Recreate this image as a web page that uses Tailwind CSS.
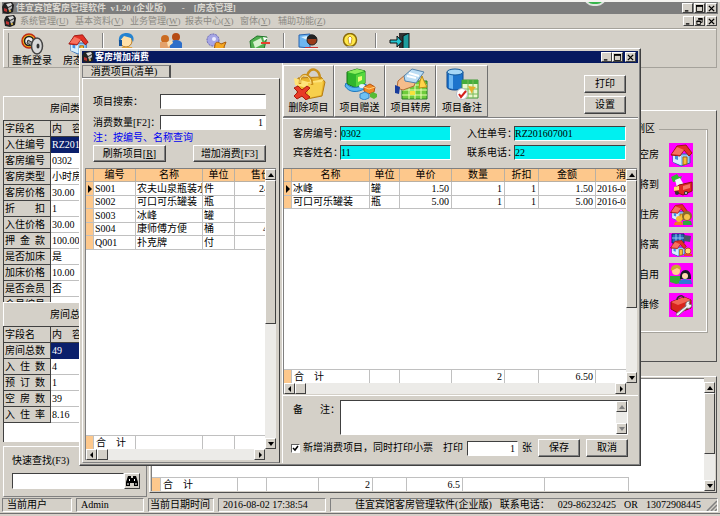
<!DOCTYPE html>
<html lang="zh-CN">
<head>
    <meta charset="UTF-8">
    <meta name="viewport" content="width=device-width, initial-scale=1.0">
    <title>佳宜宾馆客房管理软件</title>
    <script src="https://cdn.jsdelivr.net/npm/@tailwindcss/browser@4"></script>
</head>
<body class="relative flex flex-col h-screen overflow-hidden bg-[#d4d0c8] border-t-2 border-[#f4f3f0] text-black text-[10px] leading-3 font-['Liberation_Serif','Noto_Sans_CJK_SC',serif]">

    <!-- Shared glyphs -->
    <svg class="hidden">
        <symbol id="up" viewBox="0 0 8 8"><path d="M4 2 7 6H1z"/></symbol>
        <symbol id="down" viewBox="0 0 8 8"><path d="M1 2h6L4 6z"/></symbol>
        <symbol id="left" viewBox="0 0 8 8"><path d="M2 4 5 1v6z"/></symbol>
        <symbol id="right" viewBox="0 0 8 8"><path d="M6 4 3 1v6z"/></symbol>
        <symbol id="min" viewBox="0 0 8 8"><path d="M1 6h4v1.500H1z"/></symbol>
        <symbol id="max" viewBox="0 0 8 8"><path d="M.5 1h7v6.500h-7z" fill="none" stroke="#000"/><path d="M0 0h8v2H0z"/></symbol>
        <symbol id="restore" viewBox="0 0 8 8"><path d="M3 1h4v4H5M1 3.500h4v4H1z" fill="none" stroke="#000"/><path d="M2.500 0h5v2h-5zM.5 3h5v1.500h-5z"/></symbol>
        <symbol id="close" viewBox="0 0 8 8"><path d="m1 1 6 6M7 1 1 7" stroke="#000" stroke-width="1.600"/></symbol>
        <symbol id="app" viewBox="0 0 12 12"><path d="M2 1l8-1 2 3-1 7-5 2-5-1-1-6z" fill="#222"/><path d="M4 2l5-1 1 2-4 2z" fill="#ddd"/><path d="M2 6l3 1v3L2 9z" fill="#b33"/><path d="M6 6l4-2v2L7 9z" fill="#bbb"/><circle cx="8" cy="9" r="1" fill="#e8c34a"/></symbol>
        <symbol id="house" viewBox="0 0 24 24"><path d="M4 11v8l8 4 9-3v-9z" fill="#8fc8f4" stroke="#2b65b0"/><path d="M4 11l4-5 4 7v9l-8-3z" fill="#d8effc"/><path d="M8 3l9-1 6 8-3 3-5-6-4 6-9-1z" fill="#e33125" stroke="#9c1712"/><path d="M8 4l7 3-4 5-8-1z" fill="#f7725f"/><path d="M14 14h4v7l-4 1z" fill="#f6bd35" stroke="#a46711"/><path d="M6 13h3v4l-3-1z" fill="#438de0"/></symbol>
    </svg>

    <!-- Main window title -->
    <header class="flex items-center h-3 mx-0.5 shrink-0 bg-[#7d7d7d] text-[#dcd9d2] text-[9px] font-bold">
        <svg class="size-3 mr-0.5"><use href="#app"/></svg>
        <h1 class="flex-1 whitespace-pre">佳宜宾馆客房管理软件  v1.20 (企业版)       -    [房态管理]</h1>
        <div class="flex gap-px pr-px">
            <button aria-label="最小化" class="grid place-items-center w-[11px] h-[10px] border border-t-white border-l-white border-r-[#404040] border-b-[#404040] bg-[#d4d0c8]"><svg class="size-[7px]"><use href="#min"/></svg></button>
            <button aria-label="最大化" class="grid place-items-center w-[11px] h-[10px] border border-t-white border-l-white border-r-[#404040] border-b-[#404040] bg-[#d4d0c8]"><svg class="size-[7px]"><use href="#max"/></svg></button>
            <button aria-label="关闭" class="grid place-items-center w-[11px] h-[10px] border border-t-white border-l-white border-r-[#404040] border-b-[#404040] bg-[#d4d0c8]"><svg class="size-[7px]"><use href="#close"/></svg></button>
        </div>
    </header>
    <div class="absolute -top-[2px] right-[58px] w-[78px] h-[2px] bg-[#b9b9b7]"></div>
    <div class="absolute -top-[14px] right-[114px] w-[22px] h-[18px] rounded-full bg-[#35b44a] border-2 border-[#dfe3df]"></div>

    <!-- Menu -->
    <nav class="flex items-center h-[14px] mx-0.5 shrink-0 text-[9px] text-[#8b8983]">
        <svg class="size-3 ml-0.5 mr-1"><use href="#app"/></svg>
        <a href="#" class="w-[55px]">系统管理(<u>U</u>)</a>
        <a href="#" class="w-[55px]">基本资料(<u>V</u>)</a>
        <a href="#" class="w-[55px]">业务管理(<u>W</u>)</a>
        <a href="#" class="w-[55px]">报表中心(<u>X</u>)</a>
        <a href="#" class="w-[38px]">窗体(<u>Y</u>)</a>
        <a href="#" class="flex-1">辅助功能(<u>Z</u>)</a>
        <button aria-label="最小化" class="grid place-items-center w-[11px] h-[10px] border border-t-white border-l-white border-r-[#404040] border-b-[#404040]"><svg class="size-[7px]"><use href="#min"/></svg></button>
        <button aria-label="还原" class="grid place-items-center w-[11px] h-[10px] mr-px border border-t-white border-l-white border-r-[#404040] border-b-[#404040]"><svg class="size-[7px]"><use href="#restore"/></svg></button>
        <button aria-label="关闭" class="grid place-items-center w-[11px] h-[10px] mr-px border border-t-white border-l-white border-r-[#404040] border-b-[#404040]"><svg class="size-[7px]"><use href="#close"/></svg></button>
    </nav>

    <!-- Toolbar -->
    <div class="flex h-10 mx-[3px] pt-1 pl-1 shrink-0 border border-t-[#a5a29b] border-l-white border-r-[#a5a29b] border-b-[#a5a29b] shadow-[inset_0_1px_#fff]">
        <button class="flex flex-col items-center w-[47px] border-l border-[#8b8983]">
            <svg class="w-6 h-[22px] shrink-0" viewBox="0 0 24 22"><circle cx="9" cy="8" r="7" fill="#f3b21c" stroke="#c02a12" stroke-width="1.500"/><circle cx="9" cy="8" r="4.500" fill="#eee" stroke="#222" stroke-width="1.500"/><path d="m8 7 9 5-2 3-8-5z" fill="#999" stroke="#333"/><ellipse cx="17" cy="13" rx="5.500" ry="8" fill="#d8d8d8" stroke="#444" stroke-width="1.500"/><ellipse cx="18" cy="13" rx="1.500" ry="2.500" fill="#333"/></svg>
            重新登录
        </button>
        <button class="flex flex-col items-center w-[46px]">
            <svg class="size-[22px] shrink-0"><use href="#house"/></svg>
            房态表
        </button>
        <div class="w-px h-8 mx-px bg-[#808080] shadow-[1px_0_#fff]"></div>
        <button aria-label="预订" class="flex justify-center w-[44px]">
            <svg class="size-5" viewBox="0 0 20 20"><circle cx="10" cy="8" r="6" fill="#ffe0a8" stroke="#b97b20"/><path d="M3 9C2 2 6 0 11 0s8 4 6 9l-2-4-7-2z" fill="#2583d1"/><path d="M3 7h3v6H3z" fill="#14539a"/><path d="M6 14h10l2 6H4z" fill="#e0a33e"/></svg>
        </button>
        <button aria-label="入住" class="flex justify-center w-[46px]">
            <svg class="w-[22px] h-5" viewBox="0 0 22 20"><circle cx="16" cy="4" r="4" fill="#b64b13"/><path d="M10 10c2-4 10-4 12 0v9H10z" fill="#2e6fc9"/><circle cx="5" cy="6" r="4" fill="#cb6b20"/><path d="M0 9h10v8H0z" fill="#e3a16b"/><path d="m7 9 5-2 1 3-5 4z" fill="#fde1b3"/></svg>
        </button>
        <button aria-label="换房" class="flex justify-center w-[43px]">
            <svg class="w-[22px] h-5" viewBox="0 0 22 20"><circle cx="8" cy="7" r="6" fill="#a6a6e5" stroke="#6462b6" stroke-dasharray="2 1"/><circle cx="9" cy="6" r="2" fill="#eef"/><path d="M10 12c0-4 4-3 6-1l5-2-2 5 1 4H9z" fill="#f5a821" stroke="#a85a0a"/></svg>
        </button>
        <button aria-label="结账" class="flex justify-center w-[45px]">
            <svg class="w-[22px] h-5" viewBox="0 0 22 20"><path d="m1 8 7-5 10 1-3 12H2z" fill="#4fae4e" stroke="#21742a"/><path d="m4 9 8-4 2 6-8 4z" fill="#d5f0cd"/><path d="m14 4 5 1-4 3z" fill="#fff"/><path d="M12 9h9v2h-9z" fill="#e5412d"/></svg>
        </button>
        <div class="w-px h-8 mx-px bg-[#808080] shadow-[1px_0_#fff]"></div>
        <button aria-label="会员" class="flex justify-center w-[46px]">
            <svg class="w-5 h-5" viewBox="0 0 20 20"><path d="m1 2 11-1v14L1 14z" fill="#6eb6f0" stroke="#2b65b0"/><path d="m3 4 6-1v4z" fill="#d7effc"/><circle cx="14" cy="7" r="5" fill="#9b3c1a" stroke="#222"/><path d="M9 6c0-6 9-6 10 0z" fill="#222"/><path d="M7 14h13v6H7z" fill="#c33"/></svg>
        </button>
        <button aria-label="提示" class="flex justify-center w-[38px]">
            <svg class="w-5 h-5" viewBox="0 0 20 20"><circle cx="10" cy="7" r="6.500" fill="#ffe94a" stroke="#8a6a0a" stroke-width="1.500"/><path d="m8 5 2-2 2 2-1 6H9z" fill="#fff" stroke="#c08a10" stroke-width=".8"/><path d="M7 13h6v5H7z" fill="#aaa"/></svg>
        </button>
        <div class="w-px h-8 ml-1.5 bg-[#808080] shadow-[1px_0_#fff]"></div>
        <button aria-label="退出" class="flex justify-center w-[48px]">
            <svg class="w-[22px] h-5" viewBox="0 0 22 20"><path d="M10 0h10v17H10z" fill="#333"/><path d="m14 3 6-3v17l-6 3z" fill="#1f9d9d" stroke="#111"/><path d="M1 7h7V3l5 5.500-5 5.500v-4H1z" fill="#27c6d2" stroke="#111"/></svg>
        </button>
    </div>

    <main class="flex flex-1 min-h-0 mx-[3px] gap-0.5">
        <!-- Room info column -->
        <section class="flex flex-col w-36 shrink-0 pt-7">
            <h2 class="h-6 shrink-0 pl-[46px] pt-1.5 border-t border-l border-white">房间类型信息</h2>
            <div class="h-[182px] shrink-0 overflow-hidden bg-white border-t border-l border-[#404040]">
                <table class="w-full table-fixed border-separate border-spacing-0 text-left whitespace-pre">
                    <colgroup><col class="w-[47px]"><col></colgroup>
                    <tr class="h-4 bg-[#d4d0c8]"><th class="font-normal pl-px border-r border-b border-[#404040]">字段名</th><th class="font-normal pl-px border-b border-[#404040]">内    容</th></tr>
                    <tr class="h-4"><th class="font-normal px-px bg-[#d4d0c8] border-r border-b border-[#404040]">入住编号</th><td class="pl-px bg-[#0a1f6b] text-white">RZ201607001</td></tr>
                    <tr class="h-4"><th class="font-normal px-px bg-[#d4d0c8] border-r border-b border-[#404040]">客房编号</th><td class="pl-px border-b border-[#c0c0c0]">0302</td></tr>
                    <tr class="h-4"><th class="font-normal px-px bg-[#d4d0c8] border-r border-b border-[#404040]">客房类型</th><td class="pl-px border-b border-[#c0c0c0]">小时房</td></tr>
                    <tr class="h-4"><th class="font-normal px-px bg-[#d4d0c8] border-r border-b border-[#404040]">客房价格</th><td class="pl-px border-b border-[#c0c0c0]">30.00</td></tr>
                    <tr class="h-4"><th class="font-normal px-px bg-[#d4d0c8] border-r border-b border-[#404040]"><span class="flex justify-between w-10"><i class="not-italic">折</i><i class="not-italic">扣</i></span></th><td class="pl-px border-b border-[#c0c0c0]">1</td></tr>
                    <tr class="h-4"><th class="font-normal px-px bg-[#d4d0c8] border-r border-b border-[#404040]">入住价格</th><td class="pl-px border-b border-[#c0c0c0]">30.00</td></tr>
                    <tr class="h-4"><th class="font-normal px-px bg-[#d4d0c8] border-r border-b border-[#404040]"><span class="flex justify-between w-10"><i class="not-italic">押</i><i class="not-italic">金</i><i class="not-italic">款</i></span></th><td class="pl-px border-b border-[#c0c0c0]">100.00</td></tr>
                    <tr class="h-4"><th class="font-normal px-px bg-[#d4d0c8] border-r border-b border-[#404040]">是否加床</th><td class="pl-px border-b border-[#c0c0c0]">是</td></tr>
                    <tr class="h-4"><th class="font-normal px-px bg-[#d4d0c8] border-r border-b border-[#404040]">加床价格</th><td class="pl-px border-b border-[#c0c0c0]">10.00</td></tr>
                    <tr class="h-4"><th class="font-normal px-px bg-[#d4d0c8] border-r border-b border-[#404040]">是否会员</th><td class="pl-px border-b border-[#c0c0c0]">否</td></tr>
                    <tr class="h-4"><th class="font-normal px-px bg-[#d4d0c8] border-r border-b border-[#404040]">会员编号</th><td class="pl-px border-b border-[#c0c0c0]"></td></tr>
                </table>
            </div>
            <h2 class="h-6 shrink-0 pl-[46px] pt-1.5 border-t border-l border-white">房间总数信息</h2>
            <div class="flex-1 min-h-0 overflow-hidden bg-white border-t border-l border-[#404040]">
                <table class="w-full table-fixed border-separate border-spacing-0 text-left whitespace-pre">
                    <colgroup><col class="w-[47px]"><col></colgroup>
                    <tr class="h-4 bg-[#d4d0c8]"><th class="font-normal pl-px border-r border-b border-[#404040]">字段名</th><th class="font-normal pl-px border-b border-[#404040]">内    容</th></tr>
                    <tr class="h-4"><th class="font-normal px-px bg-[#d4d0c8] border-r border-b border-[#404040]">房间总数</th><td class="pl-px bg-[#0a1f6b] text-white">49</td></tr>
                    <tr class="h-4"><th class="font-normal px-px bg-[#d4d0c8] border-r border-b border-[#404040]"><span class="flex justify-between w-10"><i class="not-italic">入</i><i class="not-italic">住</i><i class="not-italic">数</i></span></th><td class="pl-px border-b border-[#c0c0c0]">4</td></tr>
                    <tr class="h-4"><th class="font-normal px-px bg-[#d4d0c8] border-r border-b border-[#404040]"><span class="flex justify-between w-10"><i class="not-italic">预</i><i class="not-italic">订</i><i class="not-italic">数</i></span></th><td class="pl-px border-b border-[#c0c0c0]">1</td></tr>
                    <tr class="h-4"><th class="font-normal px-px bg-[#d4d0c8] border-r border-b border-[#404040]"><span class="flex justify-between w-10"><i class="not-italic">空</i><i class="not-italic">房</i><i class="not-italic">数</i></span></th><td class="pl-px border-b border-[#c0c0c0]">39</td></tr>
                    <tr class="h-4"><th class="font-normal px-px bg-[#d4d0c8] border-r border-b border-[#404040]"><span class="flex justify-between w-10"><i class="not-italic">入</i><i class="not-italic">住</i><i class="not-italic">率</i></span></th><td class="pl-px border-b border-[#c0c0c0]">8.16</td></tr>
                </table>
            </div>
            <div class="h-[51px] mt-1 pt-2 pl-2 pr-1.5 shrink-0 border border-t-white border-l-white border-r-[#808080] border-b-[#808080]">
                <label for="quickFind" class="block">快速查找(F3)</label>
                <div class="flex mt-1.5">
                    <input id="quickFind" type="text" class="w-28 h-4 bg-white border border-t-[#404040] border-l-[#404040] border-r-white border-b-white">
                    <button aria-label="查找" class="grid place-items-center w-4 h-4 border border-t-white border-l-white border-r-[#404040] border-b-[#404040]"><svg class="size-3" viewBox="0 0 12 12"><path d="M2 1h3v2h2V1h3l2 6v4H8V8H4v3H0V7z"/><path d="M1.500 8h1v2h-1zM9.500 8h1v2h-1zM3 4h1v2H3zM8 4h1v2H8z" fill="#fff"/></svg></button>
                </div>
            </div>
        </section>

        <!-- Room state area -->
        <section class="flex flex-col flex-1 min-w-0 pt-[42px]">
            <div class="flex justify-end h-[252px] shrink-0 pt-3 pr-2 border border-t-white border-l-white border-r-[#505050] border-b-[#505050]">
                <fieldset class="w-24 h-[210px] pr-3.5 border border-[#a5a29b] shadow-[inset_-1px_-1px_#fff]">
                    <legend class="ml-3 pr-1">图例区</legend>
                    <ul class="flex flex-col gap-1.5 pt-2">
                        <li class="flex items-center justify-end gap-2.5 h-6">空房
                            <svg class="size-6 bg-[#f0f]"><use href="#house"/></svg></li>
                        <li class="flex items-center justify-end gap-2.5 h-6">将到
                            <svg class="size-6 bg-[#f0f]" viewBox="0 0 24 24"><path d="m2 4 6-3 2 3 3-1-2 5-7 1z" fill="#32b933"/><path d="m6 7 5-2 4 7-7 2z" fill="#f4f5ff"/><path d="m10 12 13-3v9l-9 4-8-3v-4z" fill="#dd2922" stroke="#8b1110"/><path d="m5 14 5-1v4l-5 1z" fill="#ffdc70"/><path d="m14 13 7-2v4l-7 2z" fill="#f67666"/><circle cx="8" cy="20" r="2" fill="#333"/><circle cx="17" cy="20" r="2" fill="#333"/><circle cx="17" cy="20" r="1" fill="#ddd"/></svg></li>
                        <li class="flex items-center justify-end gap-2.5 h-6">住房
                            <svg class="size-6 bg-[#f0f]" viewBox="0 0 24 24"><use href="#house" width="19" height="19"/><circle cx="18" cy="13" r="5" fill="#8b6a2a"/><circle cx="18" cy="14" r="3" fill="#f5c34a"/><circle cx="10" cy="16" r="3" fill="#f8bd35"/><path d="M6 19h7l1 3H5z" fill="#f37a20"/><path d="M14 18h8l1 4h-9z" fill="#31a841"/></svg></li>
                        <li class="flex items-center justify-end gap-2.5 h-6">将离
                            <svg class="size-6 bg-[#f0f]" viewBox="0 0 24 24"><path d="M3 1h12v9H3z" fill="#2467b9" stroke="#112f68"/><path d="M7 1v9M11 1v9M3 5h12" stroke="#91c7ef"/><path d="m15 2 7 1-1 6-6-1z" fill="#456"/><use href="#house" y="6" width="18" height="18"/><circle cx="19" cy="18" r="3" fill="#ffd678" stroke="#b35c19"/><path d="M15 21h8v2h-8z" fill="#e4423a"/></svg></li>
                        <li class="flex items-center justify-end gap-2.5 h-6">自用
                            <svg class="size-6 bg-[#f0f]" viewBox="0 0 24 24"><circle cx="7" cy="8" r="4" fill="#ffd28d"/><path d="M2 8c-1-8 11-8 10-1L8 5z" fill="#c9a732"/><path d="M1 13h11v7l-5 1-6-2z" fill="#34ad35"/><path d="M11 16c-1-12 12-12 11 0z" fill="#171925"/><circle cx="16" cy="13" r="3" fill="#ffd9ae"/><path d="m10 18 5-2 7 1 1 4H10z" fill="#2f78d6"/></svg></li>
                        <li class="flex items-center justify-end gap-2.5 h-6">维修
                            <svg class="size-6 bg-[#f0f]" viewBox="0 0 24 24"><path d="m2 9 13-5 7 3v8L9 20l-7-4z" fill="#d8241d" stroke="#85100d"/><path d="m2 9 13-5 7 3-13 5z" fill="#f26554"/><path d="M8 7c0-4 6-6 7-2" fill="none" stroke="#333" stroke-width="1.500"/><path d="m8 20 9-7c-1-4 2-5 4-5l-1 3 3 1c-1 3-3 4-5 3l-8 7c-2 2-4 0-2-2z" fill="#eef0f5" stroke="#777"/></svg></li>
                    </ul>
                </fieldset>
            </div>
            <div class="flex flex-1 min-h-0 mt-3.5 mb-1 p-px border border-t-white border-l-white border-r-[#505050] border-b-[#505050]">
                <div class="flex flex-col justify-end flex-1 bg-white border-t border-l border-[#808080]">
                    <table class="w-[477px] h-[14px] table-fixed border-separate border-spacing-0 text-right whitespace-pre">
                        <colgroup><col class="w-[9px]"><col class="w-[77px]"><col class="w-[29px]"><col class="w-[52px]"><col class="w-[54px]"><col class="w-[34px]"><col class="w-14"><col class="w-[82px]"><col></colgroup>
                        <tr>
                            <td class="bg-[#fdc88c] border-t border-r border-[#c0c0c0]"></td>
                            <td class="text-left pl-0.5 border-t border-r border-[#c0c0c0]">合    计</td>
                            <td class="border-t border-r border-[#c0c0c0]"></td>
                            <td class="border-t border-r border-[#c0c0c0]"></td>
                            <td class="pr-0.5 border-t border-r border-[#c0c0c0]">2</td>
                            <td class="border-t border-r border-[#c0c0c0]"></td>
                            <td class="pr-0.5 border-t border-r border-[#c0c0c0]">6.5</td>
                            <td class="border-t border-r border-[#c0c0c0]"></td>
                            <td class="border-t border-r border-[#c0c0c0]"></td>
                        </tr>
                    </table>
                </div>
                <div class="flex flex-col w-[11px] mt-1 bg-[#ecebe8]">
                    <button aria-label="向上" class="grid place-items-center h-[11px] border border-t-white border-l-white border-r-[#404040] border-b-[#404040] bg-[#d4d0c8]"><svg class="size-2"><use href="#up"/></svg></button>
                    <div class="h-[61px] border border-t-white border-l-white border-r-[#404040] border-b-[#404040] bg-[#d4d0c8]"></div>
                    <button aria-label="向下" class="grid place-items-center h-[11px] mt-auto border border-t-white border-l-white border-r-[#404040] border-b-[#404040] bg-[#d4d0c8]"><svg class="size-2"><use href="#down"/></svg></button>
                </div>
            </div>
        </section>
    </main>

    <!-- Status bar -->
    <footer class="flex items-center gap-1 h-[17px] shrink-0 px-0.5 whitespace-pre border-b border-[#707070]">
        <div class="w-[70px] h-[14px] pl-1 border border-t-[#808080] border-l-[#808080] border-r-white border-b-white">当前用户</div>
        <div class="w-[68px] h-[14px] pl-1 border border-t-[#808080] border-l-[#808080] border-r-white border-b-white">Admin</div>
        <div class="w-[66px] h-[14px] pl-px border border-t-[#808080] border-l-[#808080] border-r-white border-b-white">当前日期时间</div>
        <div class="w-[108px] h-[14px] pl-1 border border-t-[#808080] border-l-[#808080] border-r-white border-b-white">2016-08-02 17:38:54</div>
        <div class="flex flex-1 items-center justify-end gap-2 h-[14px] border border-t-[#808080] border-l-[#808080] border-r-white border-b-white">
            <span>佳宜宾馆客房管理软件(企业版)</span>
            <span>联系电话：</span>
            <span>029-86232425</span>
            <span>OR</span>
            <span>13072908445</span>
            <svg class="size-3 -ml-1" viewBox="0 0 12 12"><path d="M2 12 12 2M6 12l6-6M10 12l2-2" stroke="#808080" stroke-width="1.500"/></svg>
        </div>
    </footer>
    <div class="h-0.5 shrink-0 bg-[#d8cfc9]"></div>

    <!-- Dialog: add consumption -->
    <div role="dialog" aria-labelledby="dlgTitle" class="absolute left-[79px] right-[79px] top-[46px] bottom-[50px] flex flex-col p-0.5 bg-[#d4d0c8] border border-t-white border-l-white border-r-[#404040] border-b-[#404040] shadow-[inset_-1px_-1px_#808080]">
        <header class="flex items-center h-3 shrink-0 bg-[#06195f] text-white text-[9px] font-bold">
            <svg class="size-3 mr-px"><use href="#app"/></svg>
            <h2 id="dlgTitle" class="flex-1">客房增加消费</h2>
            <button aria-label="最小化" class="grid place-items-center w-[11px] h-[10px] border border-t-white border-l-white border-r-[#404040] border-b-[#404040] bg-[#d4d0c8]"><svg class="size-[7px]"><use href="#min"/></svg></button>
            <button aria-label="最大化" class="grid place-items-center w-[11px] h-[10px] mr-0.5 border border-t-white border-l-white border-r-[#404040] border-b-[#404040] bg-[#d4d0c8]"><svg class="size-[7px]"><use href="#max"/></svg></button>
            <button aria-label="关闭" class="grid place-items-center w-[11px] h-[10px] mr-0.5 border border-t-white border-l-white border-r-[#404040] border-b-[#404040] bg-[#d4d0c8]"><svg class="size-[7px]"><use href="#close"/></svg></button>
        </header>

        <div class="flex flex-1 min-h-0">
            <!-- Item list -->
            <section class="flex flex-col w-[198px] shrink-0 pt-0.5">
                <button role="tab" class="w-[89px] h-[13px] shrink-0 pr-1 border border-[#808080] border-r-2 border-r-[#505050] leading-[11px]">消费项目(清单)</button>
                <div class="flex flex-col flex-1 min-h-0 pl-0.5 pr-[3px] pb-0.5 border border-t-white border-l-white border-r-[#404040] border-b-[#808080]">
                    <div class="grid grid-cols-[67px_106px] gap-y-1.5 shrink-0 pt-[15px] pl-2 items-center whitespace-nowrap">
                        <label for="itemSearch">项目搜索：</label>
                        <input id="itemSearch" type="text" class="h-[15px] min-w-0 bg-white border border-t-[#404040] border-l-[#404040] border-r-white border-b-white">
                        <label for="itemCount">消费数量[F2]：</label>
                        <input id="itemCount" type="text" value="1" class="h-[15px] min-w-0 pr-0.5 text-right bg-white border border-t-[#404040] border-l-[#404040] border-r-white border-b-white">
                    </div>
                    <p class="pl-2 mt-0.5 mb-px shrink-0 text-[#0000f0]">注：按编号、名称查询</p>
                    <div class="flex justify-between shrink-0 pl-2 pr-2.5 mb-1.5">
                        <button class="w-[73px] h-[17px] border border-t-white border-l-white border-r-[#404040] border-b-[#404040] shadow-[inset_-1px_-1px_#808080]">刷新项目[<u>R</u>]</button>
                        <button class="w-[73px] h-[17px] border border-t-white border-l-white border-r-[#404040] border-b-[#404040] shadow-[inset_-1px_-1px_#808080]">增加消费[F3]</button>
                    </div>
                    <div class="flex flex-1 min-h-0 border-t border-l border-[#808080]">
                        <div class="flex flex-col flex-1 min-w-0 overflow-hidden bg-white">
                            <table class="w-[208px] table-fixed border-separate border-spacing-0 text-left whitespace-nowrap">
                                <colgroup><col class="w-2"><col class="w-[42px]"><col class="w-[67px]"><col class="w-8"><col></colgroup>
                                <tr class="h-[13px] bg-[#fdc88c] text-center">
                                    <th class="border-r border-b border-[#b8b0a4]"></th>
                                    <th class="font-normal border-r border-b border-[#b8b0a4]">编号</th>
                                    <th class="font-normal border-r border-b border-[#b8b0a4]">名称</th>
                                    <th class="font-normal border-r border-b border-[#b8b0a4]">单位</th>
                                    <th class="font-normal text-left pl-4 border-r border-b border-[#b8b0a4]">售价</th>
                                </tr>
                                <tr class="h-[14px]"><td class="bg-[#fdc88c] border-r border-b border-[#c0c0c0]"><svg class="w-[7px] h-2" viewBox="0 0 7 8"><path d="M2 0l4 4-4 4z"/></svg></td><td class="pl-px border-r border-b border-[#c0c0c0]">S001</td><td class="pl-px overflow-hidden border-r border-b border-[#c0c0c0]">农夫山泉瓶装水</td><td class="pl-px border-r border-b border-[#c0c0c0]">件</td><td class="pl-6 border-r border-b border-[#c0c0c0]">24.00</td></tr>
                                <tr class="h-[13px]"><td class="bg-[#fdc88c] border-r border-b border-[#c0c0c0]"></td><td class="pl-px border-r border-b border-[#c0c0c0]">S002</td><td class="pl-px border-r border-b border-[#c0c0c0]">可口可乐罐装</td><td class="pl-px border-r border-b border-[#c0c0c0]">瓶</td><td class="border-r border-b border-[#c0c0c0]"></td></tr>
                                <tr class="h-[14px]"><td class="bg-[#fdc88c] border-r border-b border-[#c0c0c0]"></td><td class="pl-px border-r border-b border-[#c0c0c0]">S003</td><td class="pl-px border-r border-b border-[#c0c0c0]">冰峰</td><td class="pl-px border-r border-b border-[#c0c0c0]">罐</td><td class="border-r border-b border-[#c0c0c0]"></td></tr>
                                <tr class="h-[13px]"><td class="bg-[#fdc88c] border-r border-b border-[#c0c0c0]"></td><td class="pl-px border-r border-b border-[#c0c0c0]">S004</td><td class="pl-px border-r border-b border-[#c0c0c0]">康师傅方便</td><td class="pl-px border-r border-b border-[#c0c0c0]">桶</td><td class="pl-7 border-r border-b border-[#c0c0c0]">4.00</td></tr>
                                <tr class="h-[14px]"><td class="bg-[#fdc88c] border-r border-b border-[#c0c0c0]"></td><td class="pl-px border-r border-b border-[#c0c0c0]">Q001</td><td class="pl-px border-r border-b border-[#c0c0c0]">扑克牌</td><td class="pl-px border-r border-b border-[#c0c0c0]">付</td><td class="border-r border-b border-[#c0c0c0]"></td></tr>
                            </table>
                            <table class="w-[208px] h-[14px] mt-auto shrink-0 table-fixed border-separate border-spacing-0 whitespace-pre">
                                <colgroup><col class="w-2"><col class="w-[42px]"><col class="w-[67px]"><col class="w-8"><col></colgroup>
                                <tr><td class="bg-[#fdc88c] border-t border-r border-[#c0c0c0]"></td><td class="pl-0.5 border-t border-r border-[#c0c0c0]">合    计</td><td class="border-t border-r border-[#c0c0c0]"></td><td class="border-t border-r border-[#c0c0c0]"></td><td class="border-t border-r border-[#c0c0c0]"></td></tr>
                            </table>
                            <div class="flex h-[11px] shrink-0 bg-[#ecebe8]">
                                <button aria-label="向左" class="grid place-items-center w-[11px] border border-t-white border-l-white border-r-[#404040] border-b-[#404040] bg-[#d4d0c8]"><svg class="size-2"><use href="#left"/></svg></button>
                                <div class="w-[11px] border border-t-white border-l-white border-r-[#404040] border-b-[#404040] bg-[#d4d0c8]"></div>
                                <button aria-label="向右" class="grid place-items-center w-[11px] ml-auto border border-t-white border-l-white border-r-[#404040] border-b-[#404040] bg-[#d4d0c8]"><svg class="size-2"><use href="#right"/></svg></button>
                            </div>
                        </div>
                        <div class="flex flex-col w-[11px] mb-[11px] bg-[#ecebe8]">
                            <button aria-label="向上" class="grid place-items-center h-[11px] border border-t-white border-l-white border-r-[#404040] border-b-[#404040] bg-[#d4d0c8]"><svg class="size-2"><use href="#up"/></svg></button>
                            <div class="h-36 border border-t-white border-l-white border-r-[#404040] border-b-[#404040] bg-[#d4d0c8]"></div>
                            <button aria-label="向下" class="grid place-items-center h-[11px] mt-auto border border-t-white border-l-white border-r-[#404040] border-b-[#404040] bg-[#d4d0c8]"><svg class="size-2"><use href="#down"/></svg></button>
                        </div>
                    </div>
                </div>
            </section>

            <!-- Consumption detail -->
            <section class="flex flex-col flex-1 min-w-0 ml-0.5 border-l border-white">
                <div class="flex h-[55px] shrink-0 pt-0.5 border-b border-[#808080] shadow-[0_1px_#fff]">
                    <button class="flex flex-col items-center gap-0.5 w-[51px] h-[52px] pt-0.5 border border-t-white border-l-white border-r-[#707070] border-b-[#707070]">
                        <svg class="w-9 h-8 shrink-0" viewBox="0 0 36 32"><path d="M7 10 30 9l4 5-3 14-15 3L6 26z" fill="#eab52c" stroke="#b57c12"/><path d="m3 10 14 4 16-3-4 6-13 3-12-3z" fill="#ffe37a"/><path d="M17 15v15l13-3 2-13z" fill="#f7cf4c"/><path d="M9 16C8 2 22 6 21 17M16 8c3-11 13-7 13 3" fill="none" stroke="#c98f1b" stroke-width="2.500"/><path d="M9 15C8 4 20 6 20 16" fill="none" stroke="#ffe793"/><path d="m3 20 4-2 4 4 5-4 3 2-5 5 5 4-4 3-4-4-5 3-3-3 4-4z" fill="#e83a26" stroke="#a91c10"/></svg>
                        删除项目
                    </button>
                    <button class="flex flex-col items-center gap-0.5 w-[51px] h-[52px] pt-0.5 border border-t-white border-l-white border-r-[#707070] border-b-[#707070]">
                        <svg class="w-9 h-8 shrink-0" viewBox="0 0 36 32"><path d="m5 4 10-3 8 2v12l-9 5-9-4z" fill="#2fb52c" stroke="#157415"/><path d="m5 4 10-3 8 2-10 3z" fill="#8ced5d"/><path d="m14 7 9-3v11l-9 4z" fill="#56d83d"/><path d="m16 9 4-1v4l-4 2z" fill="#e7ff75"/><path d="M4 15c3 4 9 7 20 1v4c-8 5-17 5-21-2z" fill="#59b8f2" stroke="#2079be"/><ellipse cx="20" cy="18" rx="3" ry="2" fill="#e2f6ff"/><path d="m22 19 6-3 5 3-1 5-6 2-4-3z" fill="#f28a24" stroke="#b75313"/><path d="m22 19 5 2 6-2" stroke="#ffd07d" fill="none"/><path d="m18 26 5-2 4 2v4l-5 2-4-2z" fill="#6fc0f3" stroke="#3584c5"/><path d="m28 26 3-2 4 2v3l-3 2-4-2z" fill="#55bb35"/></svg>
                        项目赠送
                    </button>
                    <button class="flex flex-col items-center gap-0.5 w-[51px] h-[52px] pt-0.5 border border-t-white border-l-white border-r-[#707070] border-b-[#707070]">
                        <svg class="w-9 h-8 shrink-0" viewBox="0 0 36 32"><path d="M9 13h25v18H9z" fill="#6ecb3c" stroke="#247d23"/><path d="M9 17h25M9 22h25M9 27h25M16 13v18M22 13v18M28 13v18" stroke="#eaffb4"/><path d="M17 23h5v4h-5z" fill="#f5e23d"/><path d="m5 13 7-6 12 3-3 8-11 4-6-2z" fill="#f5bd8b" stroke="#b56c38"/><path d="m11 8 8-7 12 3-8 11-11-2z" fill="#badcf4" stroke="#5382ab"/><path d="m16 5 10 3M14 8l9 2" stroke="#fff" stroke-width="2"/><path d="m2 17 5 2-1 7-4-1z" fill="#183c9b"/><path d="m29 8 2 5 3 6-8 1 1-7z" fill="#ffd449" stroke="#b98b16"/></svg>
                        项目转房
                    </button>
                    <button class="flex flex-col items-center gap-0.5 w-[52px] h-[52px] pt-0.5 border border-t-white border-l-white border-r-[#707070] border-b-[#707070]">
                        <svg class="w-9 h-8 shrink-0" viewBox="0 0 36 32"><path d="M3 4v15c0 4 16 4 16 0V4z" fill="#1d74cc" stroke="#104a91"/><path d="M5 6v14l4 1V7z" fill="#6fb8f2"/><ellipse cx="11" cy="4" rx="8" ry="3" fill="#a6d7f6" stroke="#155c9d"/><path d="M18 12h16v18H18z" fill="#e9f7cc" stroke="#439a36"/><path d="M18 12h16v4H18z" fill="#45ad3b"/><path d="M18 21h16M18 26h16M24 12v18M29 12v18" stroke="#78ba58"/><path d="m24 18 8 1-3 3-1 4-2-4z" fill="#e7b029"/><circle cx="18" cy="26" r="5.500" fill="#fff" stroke="#b7bdc9"/><path d="m15 26 2 3 5-6" fill="none" stroke="#d4211c" stroke-width="2"/></svg>
                        项目备注
                    </button>
                    <div class="flex flex-col gap-[3px] ml-auto mr-3 pt-2.5">
                        <button class="w-[42px] h-[18px] border border-t-white border-l-white border-r-[#404040] border-b-[#404040] shadow-[inset_-1px_-1px_#808080]">打印</button>
                        <button class="w-[42px] h-[18px] border border-t-white border-l-white border-r-[#404040] border-b-[#404040] shadow-[inset_-1px_-1px_#808080]">设置</button>
                    </div>
                </div>

                <div class="grid grid-cols-[47px_1fr_47px_112px] gap-y-1 shrink-0 pt-2 pb-2 pl-2.5 pr-3 items-center whitespace-nowrap">
                    <label for="roomNo">客房编号：</label>
                    <input id="roomNo" type="text" value="0302" class="h-[15px] min-w-0 mr-4 bg-[#00f0f0] border border-t-[#404040] border-l-[#404040] border-r-white border-b-white">
                    <label for="orderNo">入住单号：</label>
                    <input id="orderNo" type="text" value="RZ201607001" class="h-[15px] min-w-0 bg-[#00f0f0] border border-t-[#404040] border-l-[#404040] border-r-white border-b-white">
                    <label for="guest">宾客姓名：</label>
                    <input id="guest" type="text" value="11" class="h-[15px] min-w-0 mr-4 bg-[#00f0f0] border border-t-[#404040] border-l-[#404040] border-r-white border-b-white">
                    <label for="phone">联系电话：</label>
                    <input id="phone" type="text" value="22" class="h-[15px] min-w-0 bg-[#00f0f0] border border-t-[#404040] border-l-[#404040] border-r-white border-b-white">
                </div>

                <div class="flex flex-1 min-h-0 mr-px border-t border-l border-[#808080]">
                    <div class="flex flex-col flex-1 min-w-0 overflow-hidden bg-white">
                        <table class="w-[384px] table-fixed border-separate border-spacing-0 text-right whitespace-nowrap">
                            <colgroup><col class="w-2"><col class="w-[78px]"><col class="w-[30px]"><col class="w-[52px]"><col class="w-[53px]"><col class="w-[34px]"><col class="w-[57px]"><col></colgroup>
                            <tr class="h-[13px] bg-[#fdc88c] text-center">
                                <th class="border-r border-b border-[#b8b0a4]"></th>
                                <th class="font-normal border-r border-b border-[#b8b0a4]">名称</th>
                                <th class="font-normal border-r border-b border-[#b8b0a4]">单位</th>
                                <th class="font-normal border-r border-b border-[#b8b0a4]">单价</th>
                                <th class="font-normal border-r border-b border-[#b8b0a4]">数量</th>
                                <th class="font-normal border-r border-b border-[#b8b0a4]">折扣</th>
                                <th class="font-normal border-r border-b border-[#b8b0a4]">金额</th>
                                <th class="font-normal text-left pl-5 border-r border-b border-[#b8b0a4]">消费时间</th>
                            </tr>
                            <tr class="h-[14px]"><td class="bg-[#fdc88c] border-r border-b border-[#c0c0c0]"><svg class="w-[7px] h-2" viewBox="0 0 7 8"><path d="M2 0l4 4-4 4z"/></svg></td><td class="text-left pl-px border-r border-b border-[#c0c0c0]">冰峰</td><td class="text-left pl-px border-r border-b border-[#c0c0c0]">罐</td><td class="pr-0.5 border-r border-b border-[#c0c0c0]">1.50</td><td class="pr-0.5 border-r border-b border-[#c0c0c0]">1</td><td class="pr-0.5 border-r border-b border-[#c0c0c0]">1</td><td class="pr-0.5 border-r border-b border-[#c0c0c0]">1.50</td><td class="text-left pl-px border-r border-b border-[#c0c0c0]">2016-08-02</td></tr>
                            <tr class="h-[13px]"><td class="bg-[#fdc88c] border-r border-b border-[#c0c0c0]"></td><td class="text-left pl-px border-r border-b border-[#c0c0c0]">可口可乐罐装</td><td class="text-left pl-px border-r border-b border-[#c0c0c0]">瓶</td><td class="pr-0.5 border-r border-b border-[#c0c0c0]">5.00</td><td class="pr-0.5 border-r border-b border-[#c0c0c0]">1</td><td class="pr-0.5 border-r border-b border-[#c0c0c0]">1</td><td class="pr-0.5 border-r border-b border-[#c0c0c0]">5.00</td><td class="text-left pl-px border-r border-b border-[#c0c0c0]">2016-08-02</td></tr>
                        </table>
                        <table class="w-[384px] h-[14px] mt-auto shrink-0 table-fixed border-separate border-spacing-0 text-right whitespace-pre">
                            <colgroup><col class="w-2"><col class="w-[78px]"><col class="w-[30px]"><col class="w-[52px]"><col class="w-[53px]"><col class="w-[34px]"><col class="w-[57px]"><col></colgroup>
                            <tr><td class="bg-[#fdc88c] border-t border-r border-[#c0c0c0]"></td><td class="text-left pl-0.5 border-t border-r border-[#c0c0c0]">合    计</td><td class="border-t border-r border-[#c0c0c0]"></td><td class="border-t border-r border-[#c0c0c0]"></td><td class="pr-0.5 border-t border-r border-[#c0c0c0]">2</td><td class="border-t border-r border-[#c0c0c0]"></td><td class="pr-0.5 border-t border-r border-[#c0c0c0]">6.50</td><td class="border-t border-r border-[#c0c0c0]"></td></tr>
                        </table>
                        <div class="flex h-[11px] shrink-0 bg-[#ecebe8]">
                            <button aria-label="向左" class="grid place-items-center w-[11px] border border-t-white border-l-white border-r-[#404040] border-b-[#404040] bg-[#d4d0c8]"><svg class="size-2"><use href="#left"/></svg></button>
                            <div class="w-[11px] border border-t-white border-l-white border-r-[#404040] border-b-[#404040] bg-[#d4d0c8]"></div>
                            <button aria-label="向右" class="grid place-items-center w-[11px] ml-auto border border-t-white border-l-white border-r-[#404040] border-b-[#404040] bg-[#d4d0c8]"><svg class="size-2"><use href="#right"/></svg></button>
                        </div>
                    </div>
                    <div class="flex flex-col w-[11px] mb-[11px] bg-[#ecebe8]">
                        <button aria-label="向上" class="grid place-items-center h-[11px] border border-t-white border-l-white border-r-[#404040] border-b-[#404040] bg-[#d4d0c8]"><svg class="size-2"><use href="#up"/></svg></button>
                        <div class="h-32 border border-t-white border-l-white border-r-[#404040] border-b-[#404040] bg-[#d4d0c8]"></div>
                        <button aria-label="向下" class="grid place-items-center h-[11px] mt-auto border border-t-white border-l-white border-r-[#404040] border-b-[#404040] bg-[#d4d0c8]"><svg class="size-2"><use href="#down"/></svg></button>
                    </div>
                </div>

                <div class="shrink-0 mt-px pt-1 pb-1.5 pl-2 pr-2.5 border-t border-white">
                    <div class="flex">
                        <label for="memo" class="flex justify-between w-[49px] pl-0.5 pt-1 shrink-0"><span>备</span><span>注：</span></label>
                        <div class="flex flex-1 h-[35px] bg-white border border-t-[#404040] border-l-[#404040] border-r-white border-b-white">
                            <textarea id="memo" class="flex-1 min-w-0 resize-none overflow-hidden"></textarea>
                            <div class="flex flex-col justify-between w-[11px] bg-[#ecebe8]">
                                <button aria-label="向上" class="grid place-items-center h-[11px] border border-t-white border-l-white border-r-[#404040] border-b-[#404040] bg-[#d4d0c8]"><svg class="size-2 fill-[#808080]"><use href="#up"/></svg></button>
                                <button aria-label="向下" class="grid place-items-center h-[11px] border border-t-white border-l-white border-r-[#404040] border-b-[#404040] bg-[#d4d0c8]"><svg class="size-2 fill-[#808080]"><use href="#down"/></svg></button>
                            </div>
                        </div>
                    </div>
                    <div class="flex items-center mt-1">
                        <span class="relative grid place-items-center size-[9px] mr-[3px]">
                            <input id="receipt" type="checkbox" checked class="appearance-none block size-[9px] bg-white border border-t-[#606060] border-l-[#606060] border-r-white border-b-white">
                            <svg class="absolute size-[9px] pointer-events-none" viewBox="0 0 9 9"><path d="m2 4 2 2 3-4" fill="none" stroke="#000" stroke-width="1.500"/></svg>
                        </span>
                        <label for="receipt">新增消费项目，同时打印小票</label>
                        <label for="copies" class="ml-auto mr-1">打印</label>
                        <input id="copies" type="text" value="1" class="w-[51px] h-[15px] mr-1 pr-0.5 text-right bg-white border border-t-[#404040] border-l-[#404040] border-r-white border-b-white">
                        张
                        <button class="w-[42px] h-[18px] ml-1.5 mr-1.5 border border-t-white border-l-white border-r-[#404040] border-b-[#404040] shadow-[inset_-1px_-1px_#808080]">保存</button>
                        <button class="w-[42px] h-[18px] border border-t-white border-l-white border-r-[#404040] border-b-[#404040] shadow-[inset_-1px_-1px_#808080]">取消</button>
                    </div>
                </div>
            </section>
        </div>
    </div>
</body>
</html>
